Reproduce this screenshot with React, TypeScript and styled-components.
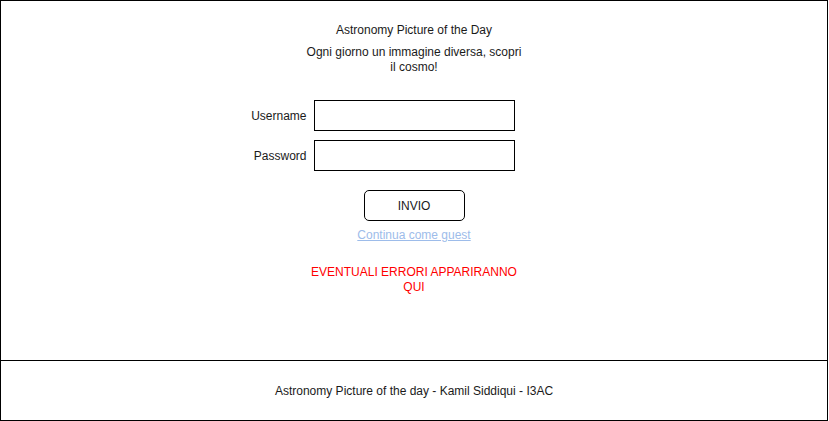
import React from "react";
import styled, { createGlobalStyle } from "styled-components";

const GlobalStyle = createGlobalStyle`
  html, body { margin: 0; padding: 0; background: #ffffff; }
  body { font-family: "Liberation Sans", Arial, Helvetica, sans-serif; color: #1a1a1a; }
  * { box-sizing: border-box; }
`;

const Frame = styled.div`
  width: 828px;
  height: 421px;
  border: 1px solid #000;
  display: flex;
  flex-direction: column;
  background: #fff;
`;

const Main = styled.main`
  height: 360px;
  flex-shrink: 0;
  border-bottom: 1px solid #000;
  display: flex;
  flex-direction: column;
  align-items: center;
  padding-top: 22px;
  font-size: 12px;
`;

const Title = styled.h1`
  margin: 0;
  font-size: 12px;
  font-weight: normal;
  line-height: 15px;
`;

const Subtitle = styled.p`
  margin: 7px 0 0;
  width: 222px;
  text-align: center;
  line-height: 15px;
`;

const Form = styled.form`
  margin-top: 25px;
  width: 100%;
  display: grid;
  grid-template-columns: 1fr 201px 1fr;
  row-gap: 9px;
  align-items: center;
`;

const Label = styled.label`
  grid-column: 1;
  justify-self: end;
  padding-right: 7px;
  font-size: 12px;
  line-height: 14px;
`;

const Input = styled.input`
  grid-column: 2;
  width: 201px;
  height: 31px;
  border: 1px solid #000;
  border-radius: 0;
  margin: 0;
  padding: 0 6px;
  font: inherit;
  outline: none;
`;

const Button = styled.button`
  margin-top: 19px;
  width: 101px;
  height: 31px;
  border: 1px solid #000;
  border-radius: 5px;
  background: #fff;
  font-family: inherit;
  font-size: 12px;
  color: #1a1a1a;
  padding: 0;
  cursor: pointer;
`;

const GuestLink = styled.a`
  margin-top: 7px;
  line-height: 14px;
  font-size: 12px;
  color: #9dbcea;
  text-decoration: underline;
`;

const ErrorText = styled.p`
  margin: 23px 0 0;
  width: 215px;
  text-align: center;
  color: #ff0000;
  line-height: 15px;
  font-size: 12px;
`;

const Footer = styled.footer`
  flex: 1;
  display: flex;
  align-items: center;
  justify-content: center;
  font-size: 12px;
`;

export default function App() {
  return (
    <>
      <GlobalStyle />
      <Frame>
        <Main>
          <Title>Astronomy Picture of the Day</Title>
          <Subtitle>Ogni giorno un immagine diversa, scopri il cosmo!</Subtitle>
          <Form onSubmit={(e) => e.preventDefault()}>
            <Label htmlFor="username">Username</Label>
            <Input id="username" type="text" />
            <Label htmlFor="password">Password</Label>
            <Input id="password" type="password" />
          </Form>
          <Button type="button">INVIO</Button>
          <GuestLink href="#">Continua come guest</GuestLink>
          <ErrorText>EVENTUALI ERRORI APPARIRANNO QUI</ErrorText>
        </Main>
        <Footer>Astronomy Picture of the day - Kamil Siddiqui - I3AC</Footer>
      </Frame>
    </>
  );
}
